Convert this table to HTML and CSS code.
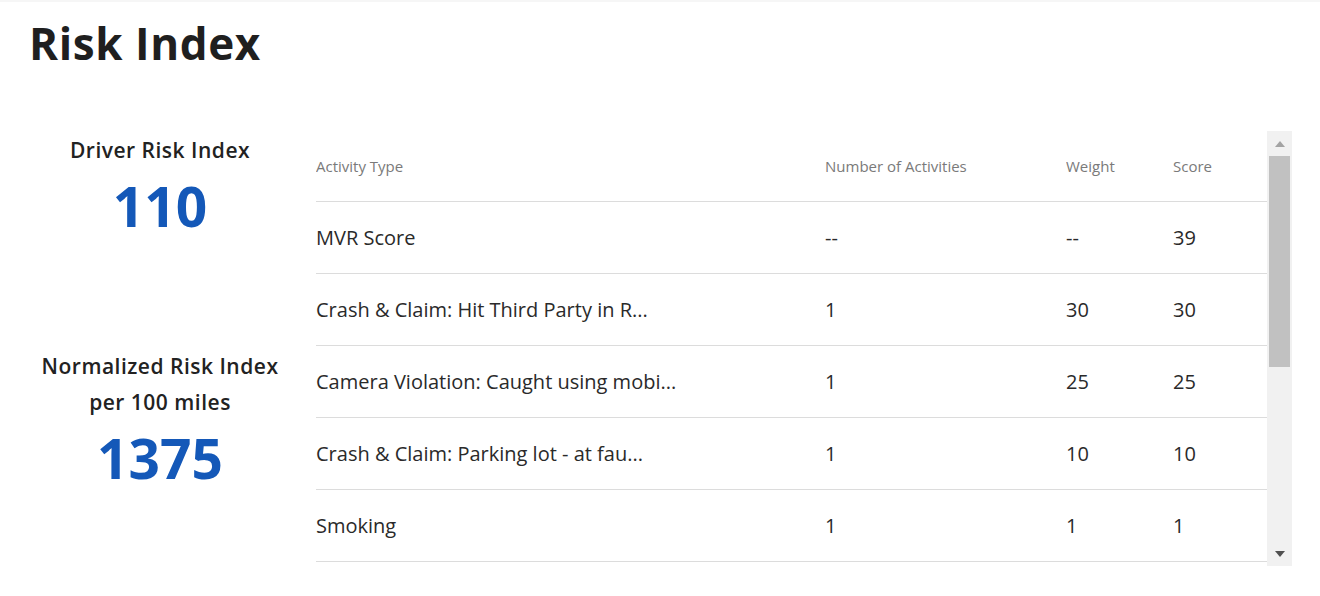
FILE: index.html
```html
<!DOCTYPE html>
<html lang="en">
<head>
<meta charset="utf-8">
<title>Risk Index</title>
<link rel="stylesheet" href="styles.css">
</head>
<body>
<div class="page">
  <h1 class="page-title">Risk Index</h1>
  <div class="main">
    <div class="summary">
      <div class="metric metric-driver">
        <div class="metric-label">Driver Risk Index</div>
        <div class="metric-value">110</div>
      </div>
      <div class="metric metric-normalized">
        <div class="metric-label">Normalized Risk Index<br>per 100 miles</div>
        <div class="metric-value">1375</div>
      </div>
    </div>
    <div class="table-box">
      <div class="table-scroll">
        <table class="activity-table">
          <thead>
            <tr>
              <th class="col-type">Activity Type</th>
              <th class="col-count">Number of Activities</th>
              <th class="col-weight">Weight</th>
              <th class="col-score">Score</th>
            </tr>
          </thead>
          <tbody>
            <tr><td>MVR Score</td><td>--</td><td>--</td><td>39</td></tr>
            <tr><td>Crash &amp; Claim: Hit Third Party in R...</td><td>1</td><td>30</td><td>30</td></tr>
            <tr><td>Camera Violation: Caught using mobi...</td><td>1</td><td>25</td><td>25</td></tr>
            <tr><td>Crash &amp; Claim: Parking lot - at fau...</td><td>1</td><td>10</td><td>10</td></tr>
            <tr><td>Smoking</td><td>1</td><td>1</td><td>1</td></tr>
          </tbody>
        </table>
      </div>
      <div class="scrollbar">
        <div class="sb-btn sb-up"><span class="tri tri-up"></span></div>
        <div class="sb-track"><div class="sb-thumb"></div></div>
        <div class="sb-btn sb-down"><span class="tri tri-down"></span></div>
      </div>
    </div>
  </div>
</div>
</body>
</html>
```

FILE: styles.css
```css
html, body {
  margin: 0;
  padding: 0;
  background: #ffffff;
}

body {
  font-family: "Open Sans", "Noto Sans", "Liberation Sans", sans-serif;
  color: #222222;
}

.page {
  border-top: 2px solid #f6f6f6;
  height: 594px;
  overflow: hidden;
}

.page-title {
  margin: 0;
  padding: 12px 0 0 29px;
  font-size: 44px;
  line-height: 58px;
  font-weight: 700;
  letter-spacing: 0.6px;
  color: #1f1f1f;
}

.main {
  display: flex;
  margin-top: 59px;
  padding-left: 30px;
}

.summary {
  width: 260px;
  margin-right: 26px;
  display: flex;
  flex-direction: column;
  align-items: center;
  text-align: center;
}

.metric-label {
  font-size: 21px;
  font-weight: 600;
  line-height: 36px;
  color: #222222;
  letter-spacing: 0.5px;
}

.metric-value {
  font-size: 55px;
  font-weight: 700;
  line-height: 64px;
  color: #1458b8;
}

.metric-driver {
  padding-top: 1px;
}

.metric-driver .metric-value {
  margin-top: 6px;
}

.metric-normalized {
  margin-top: 110px;
}

.metric-normalized .metric-value {
  margin-top: 6px;
}

.table-box {
  display: flex;
  height: 435px;
}

.table-scroll {
  width: 951px;
  height: 435px;
  overflow: hidden;
}

.activity-table {
  width: 951px;
  border-collapse: collapse;
  table-layout: fixed;
}

.activity-table th,
.activity-table td {
  padding: 0;
  text-align: left;
  white-space: nowrap;
  overflow: hidden;
  border-bottom: 1px solid #dcdcdc;
}

.activity-table th {
  height: 70px;
  font-size: 15px;
  font-weight: 400;
  color: #7a7a7a;
  vertical-align: middle;
}

.activity-table td {
  height: 71px;
  font-size: 20px;
  color: #2a2a2a;
}

.col-type { width: 509px; }
.col-count { width: 241px; }
.col-weight { width: 107px; }
.col-score { width: 94px; }

.scrollbar {
  width: 25px;
  height: 435px;
  background: #f1f1f1;
  display: flex;
  flex-direction: column;
}

.sb-btn {
  height: 25px;
  display: flex;
  align-items: center;
  justify-content: center;
}

.sb-track {
  flex: 1;
  padding: 0 2px;
}

.sb-thumb {
  height: 211px;
  background: #c1c1c1;
}

.tri {
  width: 0;
  height: 0;
  border-left: 5px solid transparent;
  border-right: 5px solid transparent;
}

.tri-up {
  border-bottom: 6px solid #a3a3a3;
}

.tri-down {
  border-top: 6px solid #505050;
}
```
